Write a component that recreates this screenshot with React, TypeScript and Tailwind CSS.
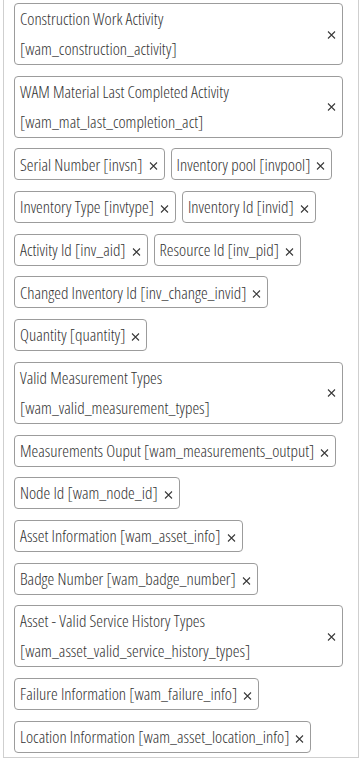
type Field = { label: string; key: string; wide?: boolean };

const fields: Field[] = [
  { label: 'Construction Work Activity', key: 'wam_construction_activity', wide: true },
  { label: 'WAM Material Last Completed Activity', key: 'wam_mat_last_completion_act', wide: true },
  { label: 'Serial Number', key: 'invsn' },
  { label: 'Inventory pool', key: 'invpool' },
  { label: 'Inventory Type', key: 'invtype' },
  { label: 'Inventory Id', key: 'invid' },
  { label: 'Activity Id', key: 'inv_aid' },
  { label: 'Resource Id', key: 'inv_pid' },
  { label: 'Changed Inventory Id', key: 'inv_change_invid' },
  { label: 'Quantity', key: 'quantity' },
  { label: 'Valid Measurement Types', key: 'wam_valid_measurement_types', wide: true },
  { label: 'Measurements Ouput', key: 'wam_measurements_output' },
  { label: 'Node Id', key: 'wam_node_id' },
  { label: 'Asset Information', key: 'wam_asset_info' },
  { label: 'Badge Number', key: 'wam_badge_number' },
  { label: 'Asset - Valid Service History Types', key: 'wam_asset_valid_service_history_types', wide: true },
  { label: 'Failure Information', key: 'wam_failure_info' },
  { label: 'Location Information', key: 'wam_asset_location_info' },
];

function Cross() {
  return (
    <svg width="9" height="9" viewBox="0 0 9 9" className="shrink-0">
      <path d="M1 1.5L8 8.5M8 1.5L1 8.5" stroke="#3a3a3a" strokeWidth="1.1" />
    </svg>
  );
}

function Chip({ field }: { field: Field }) {
  if (field.wide) {
    // long labels wrap onto two lines and take the full row
    return (
      <div className="flex items-center justify-between w-[329px] h-[62px] border border-[#9c9c9c] rounded-[4px] pl-[5px] pr-[6px]">
        <div className="leading-[30px]">
          <div>{field.label}</div>
          <div>[{field.key}]</div>
        </div>
        <Cross />
      </div>
    );
  }
  return (
    <div className="inline-flex items-center h-[32px] border border-[#9c9c9c] rounded-[4px] pl-[5px] pr-[6px] whitespace-nowrap">
      <span>
        {field.label} [{field.key}]
      </span>
      <span className="ml-[6px] mt-[3px]">
        <Cross />
      </span>
    </div>
  );
}

export default function App() {
  return (
    <div className="bg-white min-h-[762px]">
      <div
        className="ml-[3px] w-[356px] border-l border-r border-b border-[#cfcfcf] pl-[10px] pt-[3px] pb-[4px] text-[17px] text-[#333]"
        style={{ fontFamily: '"Open Sans", sans-serif', fontStretch: 'condensed', fontWeight: 350 }}
      >
        <div className="flex flex-wrap gap-x-[6px] gap-y-[10.7px]">
          {fields.map((f) => (
            <Chip key={f.key} field={f} />
          ))}
        </div>
      </div>
    </div>
  );
}
